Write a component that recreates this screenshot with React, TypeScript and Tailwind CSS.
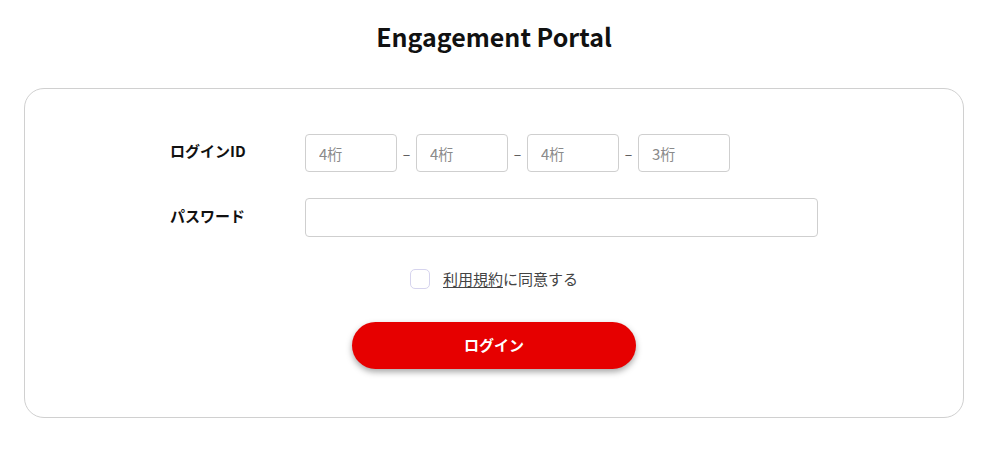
import { useState } from "react";

const font = { fontFamily: '"Noto Sans CJK JP", "Noto Sans", sans-serif' };

function IdBox({ placeholder }: { placeholder: string }) {
  return (
    <input
      type="text"
      placeholder={placeholder}
      className="w-[92px] h-[38px] rounded border border-[#cfcfcf] px-[13px] text-[15px] text-[#333] placeholder:text-[#8a8a8a] focus:outline-none"
    />
  );
}

function Dash() {
  return <span className="w-[19px] text-center text-[14px] text-[#555]">–</span>;
}

export default function App() {
  const [agree, setAgree] = useState(false);

  return (
    <main className="min-h-[451px] bg-white px-6 pt-[18px]" style={font}>
      <h1 className="text-center text-[25px] font-bold text-[#111] leading-[36px]">
        Engagement Portal
      </h1>
      <div className="mt-[34px] rounded-[20px] border border-[#d0d0d0] pt-[45px] pb-[48px]">
        <div className="mx-auto w-[648px]">
          <div className="flex items-center">
            <label className="w-[135px] text-[15px] leading-[20px] font-bold text-[#111] -mt-[4px]">ログインID</label>
            <div className="flex items-center">
              <IdBox placeholder="4桁" />
              <Dash />
              <IdBox placeholder="4桁" />
              <Dash />
              <IdBox placeholder="4桁" />
              <Dash />
              <IdBox placeholder="3桁" />
            </div>
          </div>
          <div className="mt-[26px] flex items-center">
            <label className="w-[135px] text-[15px] leading-[20px] font-bold text-[#111] -mt-[4px]">パスワード</label>
            <input
              type="password"
              className="h-[39px] w-[514px] rounded border border-[#cfcfcf] px-3 focus:outline-none"
            />
          </div>
          <div className="mt-[31px] flex items-center justify-center">
            <label className="flex cursor-pointer items-center gap-[13px] text-[15px] text-[#444]">
              <span
                onClick={() => setAgree(!agree)}
                className={
                  "h-[20px] w-[20px] rounded-[5px] border border-[#d6d4ee] " +
                  (agree ? "bg-[#e60000]" : "bg-white")
                }
              />
              <span>
                <span className="underline underline-offset-2">利用規約</span>に同意する
              </span>
            </label>
          </div>
          <div className="mt-[31px] flex justify-center">
            <button className="h-[47px] w-[284px] rounded-full bg-[#e60000] text-[15px] font-bold text-white shadow-[0_3px_6px_rgba(0,0,0,0.35)]">
              ログイン
            </button>
          </div>
        </div>
      </div>
    </main>
  );
}
